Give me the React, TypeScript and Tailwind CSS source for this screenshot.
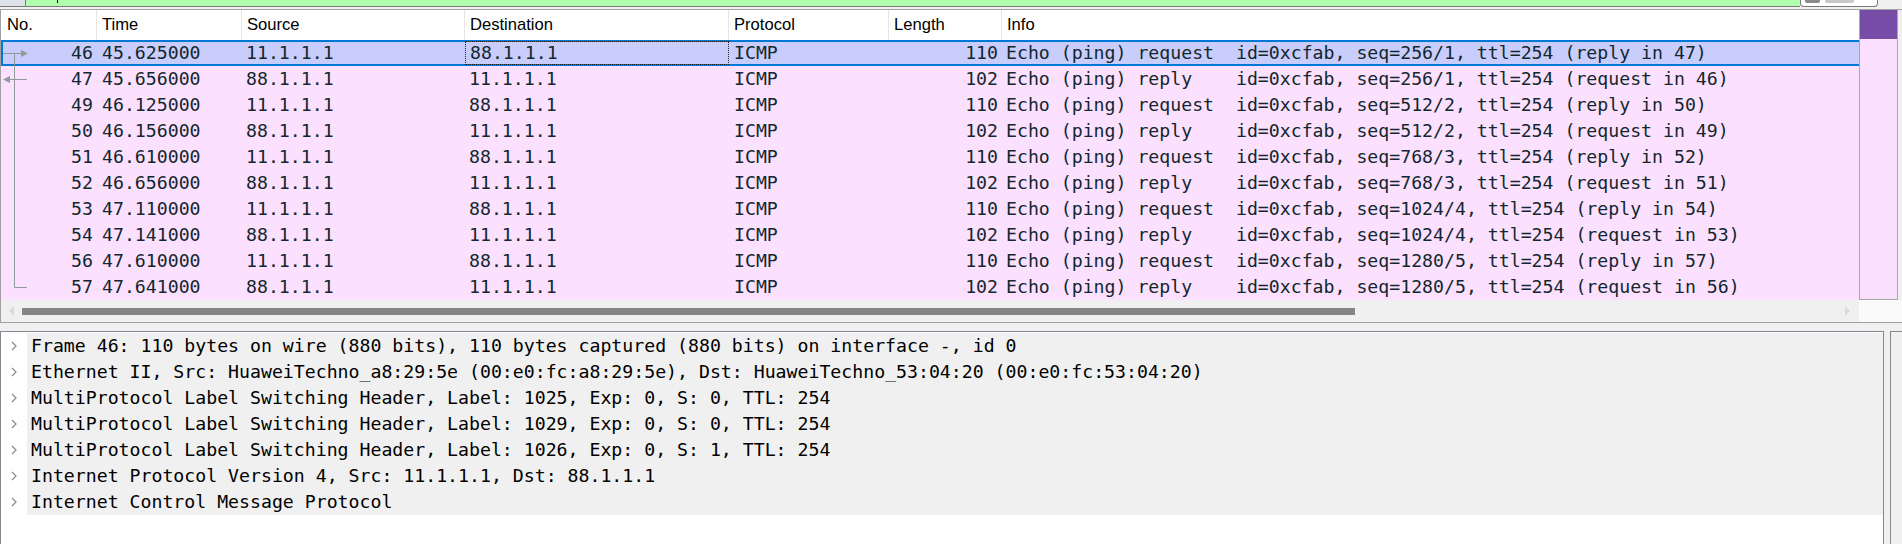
import React from 'react';

type Pkt = {
  no: number;
  time: string;
  src: string;
  dst: string;
  len: number;
  info: string;
};

const packets: Pkt[] = [
  { no: 46, time: '45.625000', src: '11.1.1.1', dst: '88.1.1.1', len: 110, info: 'Echo (ping) request  id=0xcfab, seq=256/1, ttl=254 (reply in 47)' },
  { no: 47, time: '45.656000', src: '88.1.1.1', dst: '11.1.1.1', len: 102, info: 'Echo (ping) reply    id=0xcfab, seq=256/1, ttl=254 (request in 46)' },
  { no: 49, time: '46.125000', src: '11.1.1.1', dst: '88.1.1.1', len: 110, info: 'Echo (ping) request  id=0xcfab, seq=512/2, ttl=254 (reply in 50)' },
  { no: 50, time: '46.156000', src: '88.1.1.1', dst: '11.1.1.1', len: 102, info: 'Echo (ping) reply    id=0xcfab, seq=512/2, ttl=254 (request in 49)' },
  { no: 51, time: '46.610000', src: '11.1.1.1', dst: '88.1.1.1', len: 110, info: 'Echo (ping) request  id=0xcfab, seq=768/3, ttl=254 (reply in 52)' },
  { no: 52, time: '46.656000', src: '88.1.1.1', dst: '11.1.1.1', len: 102, info: 'Echo (ping) reply    id=0xcfab, seq=768/3, ttl=254 (request in 51)' },
  { no: 53, time: '47.110000', src: '11.1.1.1', dst: '88.1.1.1', len: 110, info: 'Echo (ping) request  id=0xcfab, seq=1024/4, ttl=254 (reply in 54)' },
  { no: 54, time: '47.141000', src: '88.1.1.1', dst: '11.1.1.1', len: 102, info: 'Echo (ping) reply    id=0xcfab, seq=1024/4, ttl=254 (request in 53)' },
  { no: 56, time: '47.610000', src: '11.1.1.1', dst: '88.1.1.1', len: 110, info: 'Echo (ping) request  id=0xcfab, seq=1280/5, ttl=254 (reply in 57)' },
  { no: 57, time: '47.641000', src: '88.1.1.1', dst: '11.1.1.1', len: 102, info: 'Echo (ping) reply    id=0xcfab, seq=1280/5, ttl=254 (request in 56)' },
];

const details = [
  'Frame 46: 110 bytes on wire (880 bits), 110 bytes captured (880 bits) on interface -, id 0',
  'Ethernet II, Src: HuaweiTechno_a8:29:5e (00:e0:fc:a8:29:5e), Dst: HuaweiTechno_53:04:20 (00:e0:fc:53:04:20)',
  'MultiProtocol Label Switching Header, Label: 1025, Exp: 0, S: 0, TTL: 254',
  'MultiProtocol Label Switching Header, Label: 1029, Exp: 0, S: 0, TTL: 254',
  'MultiProtocol Label Switching Header, Label: 1026, Exp: 0, S: 1, TTL: 254',
  'Internet Protocol Version 4, Src: 11.1.1.1, Dst: 88.1.1.1',
  'Internet Control Message Protocol',
];

// related-packet indicator drawn in the No. column
const Related = ({ idx, total }: { idx: number; total: number }) => {
  const c = '#8f9a9a';
  return (
    <svg width="30" height="26" viewBox="0 0 30 26" className="shrink-0">
      {idx === 0 && (
        <>
          <line x1="2" y1="13.5" x2="21" y2="13.5" stroke={c} />
          <polygon points="20,10 27,13.5 20,17" fill={c} />
          <line x1="13.5" y1="13.5" x2="13.5" y2="26" stroke={c} />
        </>
      )}
      {idx === 1 && (
        <>
          <line x1="13.5" y1="0" x2="13.5" y2="26" stroke={c} />
          <line x1="9" y1="13.5" x2="26" y2="13.5" stroke={c} />
          <polygon points="2,13.5 9,10 9,17" fill={c} />
        </>
      )}
      {idx > 1 && idx < total - 1 && <line x1="13.5" y1="0" x2="13.5" y2="26" stroke={c} />}
      {idx === total - 1 && (
        <>
          <line x1="13.5" y1="0" x2="13.5" y2="13.5" stroke={c} />
          <line x1="13.5" y1="13.5" x2="26" y2="13.5" stroke={c} />
        </>
      )}
    </svg>
  );
};

const Chevron = () => (
  <svg width="8" height="12" viewBox="0 0 8 12">
    <polyline points="2,2 6,6 2,10" fill="none" stroke="#8a8a8a" strokeWidth="1.2" />
  </svg>
);

const headers = [
  { label: 'No.', w: 'w-[96px]', pl: 'pl-[6px]' },
  { label: 'Time', w: 'w-[145px]', pl: 'pl-[5px]' },
  { label: 'Source', w: 'w-[223px]', pl: 'pl-[5px]' },
  { label: 'Destination', w: 'w-[264px]', pl: 'pl-[5px]' },
  { label: 'Protocol', w: 'w-[160px]', pl: 'pl-[5px]' },
  { label: 'Length', w: 'w-[113px]', pl: 'pl-[5px]' },
  { label: 'Info', w: 'flex-1', pl: 'pl-[5px]' },
];

export default function App() {
  return (
    <div className="w-[1902px] h-[544px] overflow-hidden bg-[#f0f0f0] flex flex-col font-['DejaVu_Sans_Mono',monospace] text-[18.2px] text-[#12272e]">
      {/* display filter strip (cut off at the top) */}
      <div className="h-[9px] flex shrink-0">
        <div className="w-[26px] h-[7px] bg-[#dde2e8] border-r border-b border-[#7a7a7a]" />
        <div className="relative flex-1 h-[7px] bg-[#afffaf] border-b border-[#7a7a7a]">
          <div className="absolute left-[31px] top-0 w-px h-[3px] bg-black" />
        </div>
        <div className="w-[78px] h-[7px] bg-white border border-t-0 border-[#7a7a7a] rounded-b-[4px] flex gap-[5px] pl-[4px]">
          <div className="w-[15px] h-[3px] rounded-b-[2px] bg-[#8a8a8a]" />
          <div className="w-[29px] h-[3px] rounded-b-[2px] bg-[#c8c8c8]" />
        </div>
        <div className="w-[24px]" />
      </div>

      {/* packet list */}
      <div className="shrink-0 border-t border-b border-[#a0a0a0] flex flex-col">
        <div className="flex h-[290px]">
          <div className="w-[1859px] border-l border-[#a0a0a0] flex flex-col">
            <div className="h-[30px] flex bg-white font-['Liberation_Sans',Arial,sans-serif] text-[16.6px] text-black">
              {headers.map((h) => (
                <div key={h.label} className={`${h.w} ${h.pl} flex items-center border-r border-[#e5e5e5] last:border-r-0`}>
                  {h.label}
                </div>
              ))}
            </div>
            {packets.map((p, i) => {
              const sel = i === 0;
              return (
                <div
                  key={p.no}
                  className={`h-[26px] flex items-center whitespace-pre ${
                    sel
                      ? 'bg-[#c9cdfb] shadow-[inset_0_2px_0_#0078d7,inset_0_-2px_0_#0078d7,inset_2px_0_0_#0078d7]'
                      : 'bg-[#fce0ff]'
                  }`}
                >
                  <div className="w-[96px] h-full flex items-center">
                    <Related idx={i} total={packets.length} />
                    <span className="flex-1 text-right pr-[4px]">{p.no}</span>
                  </div>
                  <div className="w-[145px] pl-[5px]">{p.time}</div>
                  <div className="w-[223px] pl-[4px]">{p.src}</div>
                  <div
                    className={`w-[264px] h-[24px] flex items-center pl-[4px] ${
                      sel ? 'border border-dotted border-[#222]' : ''
                    }`}
                  >
                    {p.dst}
                  </div>
                  <div className="w-[160px] pl-[5px]">ICMP</div>
                  <div className="w-[113px] text-right pr-[4px]">{p.len}</div>
                  <div className="flex-1 pl-[4px]">{p.info}</div>
                </div>
              );
            })}
          </div>
          {/* intelligent scrollbar */}
          <div className="w-[39px] border-l border-r border-b border-[#a8a8a8] flex flex-col">
            <div className="h-[29px] bg-[#764ca6]" />
            <div className="flex-1 bg-[#fce0ff]" />
          </div>
          <div className="flex-1" />
        </div>
        {/* horizontal scrollbar */}
        <div className="h-[22px] flex">
          <div className="w-[1859px] border-l border-[#a0a0a0] flex items-center">
            <div className="w-[21px] flex justify-center">
              <div className="w-0 h-0 border-y-[5px] border-y-transparent border-r-[5px] border-r-[#dadada]" />
            </div>
            <div className="w-[1333px] h-[7px] bg-[#858585]" />
            <div className="flex-1" />
            <div className="w-[24px] flex justify-center">
              <div className="w-0 h-0 border-y-[5px] border-y-transparent border-l-[5px] border-l-[#dadada]" />
            </div>
          </div>
          <div className="flex-1 bg-[#fafafa]" />
        </div>
      </div>

      {/* packet details */}
      <div className="mt-[8px] flex flex-1 min-h-0">
        <div className="w-[1884px] border-t border-l border-r border-[#828790] bg-white pt-px text-black">
          {details.map((d) => (
            <div key={d} className="h-[26px] flex whitespace-pre">
              <div className="w-[26px] flex items-center justify-center bg-white">
                <Chevron />
              </div>
              <div className="flex-1 bg-[#f0f0f0] flex items-center pl-[4px]">{d}</div>
            </div>
          ))}
        </div>
        <div className="w-[6px]" />
        <div className="flex-1 border-t border-l border-[#828790]" />
      </div>
    </div>
  );
}
